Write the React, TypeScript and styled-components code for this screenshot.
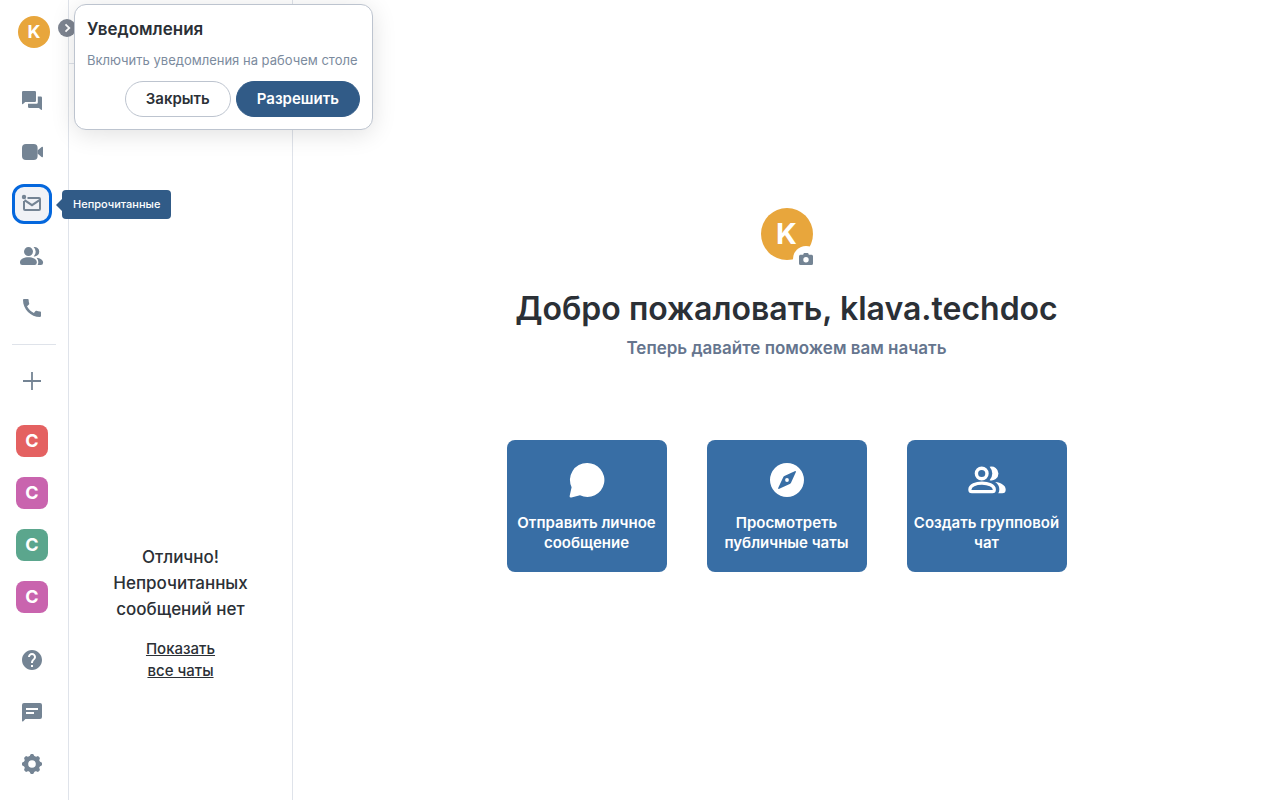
import React from "react";
import styled, { createGlobalStyle } from "styled-components";
import { MdCall, MdHelp } from "react-icons/md";

const GlobalStyle = createGlobalStyle`
  *, *::before, *::after { box-sizing: border-box; }
  body {
    margin: 0;
    background: #fff;
    color: #2b3036;
    font-family: Inter, "Liberation Sans", sans-serif;
    font-size: 15px;
  }
  button { font-family: inherit; margin: 0; cursor: pointer; }
  h1, h2, p { margin: 0; }
`;

const Page = styled.div`
  display: flex;
  min-height: 100vh;
`;

const Rail = styled.nav`
  position: relative;
  display: flex;
  flex-direction: column;
  flex: 0 0 69px;
  padding: 16px 12px;
  border-right: 1px solid #dfe3ea;
`;

const RailGroup = styled.div<{ $top?: number }>`
  display: flex;
  flex-direction: column;
  align-items: flex-start;
  gap: 12px;
  margin-top: ${(p) => p.$top ?? 0}px;
`;

const BottomGroup = styled(RailGroup)`
  margin-top: auto;
`;

const UserRow = styled.div`
  display: flex;
  padding-left: 6px;
`;

const UserButton = styled.button<{ $size: number }>`
  display: flex;
  align-items: center;
  justify-content: center;
  width: ${(p) => p.$size}px;
  height: ${(p) => p.$size}px;
  padding: 0 0 1px;
  border: 0;
  border-radius: 50%;
  background: #e8a63c;
  color: #fff;
  font-size: ${(p) => (p.$size > 40 ? 29 : 18)}px;
  font-weight: 700;
`;

const ExpandButton = styled.button`
  position: absolute;
  top: 19px;
  left: 58px;
  display: flex;
  align-items: center;
  justify-content: center;
  width: 18px;
  height: 18px;
  padding: 0;
  border: 0;
  border-radius: 50%;
  background: #7d8490;
  color: #fff;
`;

const RailButton = styled.button<{ $active?: boolean }>`
  position: relative;
  display: flex;
  align-items: center;
  justify-content: center;
  width: 40px;
  height: 40px;
  padding: 0;
  border: 3px solid ${(p) => (p.$active ? "#0467dd" : "transparent")};
  border-radius: 12px;
  background: ${(p) => (p.$active ? "#f0f2f6" : "transparent")};
  color: #748494;
`;

const Divider = styled.hr`
  width: 44px;
  height: 1px;
  margin: 16px 0 0;
  border: 0;
  background: #dfe3ea;
`;

const SpaceTile = styled.span<{ $color: string }>`
  display: flex;
  align-items: center;
  justify-content: center;
  flex: none;
  width: 32px;
  height: 32px;
  padding-bottom: 2px;
  border-radius: 8px;
  background: ${(p) => p.$color};
  color: #fff;
  font-size: 18px;
  font-weight: 700;
`;

const Tooltip = styled.div`
  position: absolute;
  top: 190px;
  left: 62px;
  z-index: 2;
  padding: 6px 11px;
  border-radius: 4px;
  background: #315b87;
  color: #fff;
  font-size: 11px;
  line-height: 17px;
  font-weight: 500;
  white-space: nowrap;

  &::before {
    content: "";
    position: absolute;
    top: 9px;
    left: -6px;
    border: 6px solid transparent;
    border-left-width: 0;
    border-right-color: #315b87;
  }
`;

const Toast = styled.section`
  position: absolute;
  top: 4px;
  left: 74px;
  z-index: 3;
  width: 299px;
  padding: 12px;
  border: 1px solid #bdc4cf;
  border-radius: 12px;
  background: #fff;
  box-shadow: 0 4px 24px rgba(0, 0, 0, 0.12);
`;

const ToastTitle = styled.h2`
  font-size: 17px;
  line-height: 24px;
  font-weight: 600;
`;

const ToastText = styled.p`
  margin-top: 8px;
  color: #7c8b9e;
  font-size: 13px;
  line-height: 22px;
  white-space: nowrap;
`;

const ToastActions = styled.div`
  display: flex;
  justify-content: flex-end;
  gap: 5px;
  margin-top: 10px;
`;

const PillButton = styled.button<{ $primary?: boolean }>`
  height: 36px;
  padding: 0 20px 2px;
  border: 1px solid ${(p) => (p.$primary ? "#315b87" : "#bdc4cf")};
  border-radius: 18px;
  background: ${(p) => (p.$primary ? "#315b87" : "#fff")};
  color: ${(p) => (p.$primary ? "#fff" : "#2b3036")};
  font-size: 15px;
  font-weight: 600;
`;

const RoomList = styled.aside`
  display: flex;
  flex-direction: column;
  flex: 0 0 224px;
  border-right: 1px solid #dfe3ea;
`;

const RoomListHeader = styled.header`
  height: 64px;
  border-bottom: 1px solid #dfe3ea;
`;

const EmptyState = styled.div`
  display: flex;
  flex: 1;
  flex-direction: column;
  align-items: center;
  justify-content: flex-end;
  gap: 16px;
  padding: 0 40px 118px;
  text-align: center;
`;

const EmptyText = styled.p`
  font-size: 17px;
  line-height: 26px;
  font-weight: 500;
`;

const EmptyLink = styled.a`
  width: 80px;
  color: inherit;
  font-size: 15px;
  line-height: 22px;
  font-weight: 500;
`;

const Main = styled.main`
  display: flex;
  flex: 1;
  flex-direction: column;
  align-items: center;
  justify-content: center;
  padding: 0 16px 20px;
  text-align: center;
`;

const AvatarWrap = styled.div`
  position: relative;
`;

const CameraBadge = styled.span`
  position: absolute;
  right: -6px;
  bottom: -12px;
  display: flex;
  align-items: center;
  justify-content: center;
  width: 26px;
  height: 26px;
  border-radius: 50%;
  background: #fff;
  color: #748494;
`;

const Title = styled.h1`
  margin-top: 28px;
  font-size: 32px;
  line-height: 42px;
  font-weight: 600;
`;

const Subtitle = styled.p`
  margin-top: 4px;
  color: #65758e;
  font-size: 17px;
  line-height: 28px;
  font-weight: 600;
`;

const Cards = styled.div`
  display: flex;
  flex-wrap: wrap;
  justify-content: center;
  gap: 40px;
  margin-top: 78px;
`;

const Card = styled.button`
  display: flex;
  flex-direction: column;
  align-items: center;
  gap: 13px;
  width: 160px;
  padding: 20px 4px 19px;
  border: 0;
  border-radius: 8px;
  background: #386ea5;
  color: #fff;
  font-size: 15px;
  line-height: 20px;
  font-weight: 600;
`;

type IconProps = { size?: number; children: React.ReactNode };

const Icon = ({ size = 24, children }: IconProps) => (
  <svg width={size} height={size} viewBox={`0 0 ${size} ${size}`} fill="currentColor" aria-hidden="true">
    {children}
  </svg>
);

const ChatsIcon = () => (
  <Icon>
    <path d="M3.2 3h11.6Q16 3 16 4.2v8.6q0 1.2-1.2 1.2H5.2L3 16.1Q2 16.6 2 15.6V4.2Q2 3 3.2 3z" />
    <path d="M17.8 8.6h3q1.2 0 1.2 1.2v11.5q0 1.2-1 .4L18.9 20H9.2Q8 20 8 18.8v-3h8.6q1.2 0 1.2-1.2z" />
  </Icon>
);

const VideoIcon = () => (
  <Icon>
    <rect x="2" y="4" width="15.6" height="16" rx="4" />
    <path d="M17.5 10.5 21.6 7.1Q23 6.3 23 7.7v8.6q0 1.4-1.4.6L17.5 13.5z" />
  </Icon>
);

const UnreadIcon = () => (
  <Icon>
    <path
      d="M7.5 6H19a1 1 0 0 1 1 1v10a1 1 0 0 1-1 1H5a1 1 0 0 1-1-1V9"
      fill="none"
      stroke="currentColor"
      strokeWidth="2"
    />
    <path d="m4.5 8.2 7.5 5 7.5-5" fill="none" stroke="currentColor" strokeWidth="2" />
    <circle cx="4" cy="5" r="2.2" />
  </Icon>
);

const PeopleIcon = () => (
  <Icon>
    <circle cx="8.5" cy="7.6" r="4.5" />
    <path d="M13.6 3.1a4.7 4.7 0 1 1 0 9.2q2.1-2.1 2.1-4.6t-2.1-4.6z" />
    <path d="M0 18.2C0 15 4.2 13.2 8.4 13.2s8.4 1.8 8.4 5v.6q0 2.2-2.2 2.2H2.2Q0 21 0 18.8z" />
    <path d="M16.6 13.7c3.5.4 6.5 2 6.5 4.7v.4q0 2.2-2.2 2.2h-3.3q.7-.9.7-2.4v-.5q0-2.4-1.7-4.4z" />
  </Icon>
);

const PlusIcon = () => (
  <Icon>
    <path d="M12 3v18M3 12h18" fill="none" stroke="currentColor" strokeWidth="1.8" />
  </Icon>
);

const FeedbackIcon = () => (
  <Icon>
    <path d="M4 3h16a2 2 0 0 1 2 2v12a2 2 0 0 1-2 2H5.4l-2.1 2.2Q2 22 2 20.5V5a2 2 0 0 1 2-2z" />
    <path d="M6 9h12M6 13h8" fill="none" stroke="#fff" strokeWidth="1.9" />
  </Icon>
);

const GearIcon = () => (
  <Icon>
    <circle cx="12" cy="12" r="6" fill="none" stroke="currentColor" strokeWidth="4.4" />
    {[0, 45, 90, 135, 180, 225, 270, 315].map((angle) => (
      <path key={angle} d="M9.3 5 10.3 2.7Q10.6 2 11.3 2h1.4q.7 0 1 .7L14.7 5z" transform={`rotate(${angle} 12 12)`} />
    ))}
  </Icon>
);

const ChevronIcon = () => (
  <Icon size={18}>
    <path d="m7.5 5.3 3.8 3.7-3.8 3.7" fill="none" stroke="currentColor" strokeWidth="1.8" />
  </Icon>
);

const CameraIcon = () => (
  <Icon size={14}>
    <path
      fillRule="evenodd"
      d="M4.5 1.7Q4.7 1 5.4 1h3.2q.7 0 .9.7l.3 1h2.7q1.5 0 1.5 1.5v7.3q0 1.5-1.5 1.5h-11Q0 13 0 11.5V4.2Q0 2.7 1.5 2.7h2.7zM7 5.1a2.7 2.7 0 1 0 0 5.4 2.7 2.7 0 0 0 0-5.4z"
    />
  </Icon>
);

const BubbleIcon = () => (
  <Icon size={40}>
    <path d="M20 3a17 17 0 1 1-7 32.3L4.4 37.5Q2.3 37.9 2.7 35.8L4.6 27.3A17 17 0 0 1 20 3z" />
  </Icon>
);

const CompassIcon = () => (
  <Icon size={40}>
    <path
      fillRule="evenodd"
      d="M20 3a17 17 0 1 0 0 34 17 17 0 0 0 0-34zM27.7 11.2Q29.4 10.7 28.8 12.3L24 22.7Q23.6 23.6 22.7 24L12.3 28.8Q10.7 29.4 11.3 27.7L16.1 17.4Q16.5 16.5 17.4 16.1z"
    />
    <circle cx="20" cy="20" r="1.9" />
  </Icon>
);

const GroupIcon = () => (
  <Icon size={40}>
    <circle cx="14.7" cy="13.5" r="5.3" fill="none" stroke="currentColor" strokeWidth="3.4" />
    <path d="M22.6 6.8a7 7 0 1 1 0 13.5q2.7-3 2.7-6.7t-2.7-6.8z" />
    <path
      d="M2.9 29.4c0-4 6-6.3 12.1-6.3s12.3 2.3 12.3 6.3v.4q0 1.9-1.9 1.9H4.8q-1.9 0-1.9-1.9z"
      fill="none"
      stroke="currentColor"
      strokeWidth="3.2"
    />
    <path d="M28.2 22c5.7.6 10.5 3.3 10.5 7.4v.4q0 3.5-3.5 3.5h-4q1.1-1.5 1.1-3.5v-.8q0-4-4.1-7z" />
  </Icon>
);

const spaces = [
  { id: "red", color: "#e46161" },
  { id: "pink", color: "#c964ae" },
  { id: "green", color: "#5ba68d" },
  { id: "pink-second", color: "#c964ae" },
];

const actions = [
  { label: "Отправить личное сообщение", icon: <BubbleIcon /> },
  { label: "Просмотреть публичные чаты", icon: <CompassIcon /> },
  { label: "Создать групповой чат", icon: <GroupIcon /> },
];

export default function App() {
  return (
    <>
      <GlobalStyle />
      <Page>
        <Rail>
          <UserRow>
            <UserButton $size={32}>K</UserButton>
          </UserRow>
          <ExpandButton>
            <ChevronIcon />
          </ExpandButton>
          <RailGroup $top={32}>
            <RailButton>
              <ChatsIcon />
            </RailButton>
            <RailButton>
              <VideoIcon />
            </RailButton>
            <RailButton $active aria-describedby="unread-tooltip">
              <UnreadIcon />
            </RailButton>
            <RailButton>
              <PeopleIcon />
            </RailButton>
            <RailButton>
              <MdCall size={24} />
            </RailButton>
          </RailGroup>
          <Divider />
          <RailGroup $top={16}>
            <RailButton>
              <PlusIcon />
            </RailButton>
          </RailGroup>
          <RailGroup $top={20}>
            {spaces.map((space) => (
              <RailButton key={space.id}>
                <SpaceTile $color={space.color}>C</SpaceTile>
              </RailButton>
            ))}
          </RailGroup>
          <BottomGroup>
            <RailButton>
              <MdHelp size={24} />
            </RailButton>
            <RailButton>
              <FeedbackIcon />
            </RailButton>
            <RailButton>
              <GearIcon />
            </RailButton>
          </BottomGroup>
          <Tooltip id="unread-tooltip" role="tooltip">
            Непрочитанные
          </Tooltip>
        </Rail>
        <RoomList>
          <RoomListHeader />
          <EmptyState>
            <EmptyText>Отлично! Непрочитанных сообщений нет</EmptyText>
            <EmptyLink href="#all">Показать все чаты</EmptyLink>
          </EmptyState>
        </RoomList>
        <Main>
          <AvatarWrap>
            <UserButton $size={52}>K</UserButton>
            <CameraBadge>
              <CameraIcon />
            </CameraBadge>
          </AvatarWrap>
          <Title>Добро пожаловать, klava.techdoc</Title>
          <Subtitle>Теперь давайте поможем вам начать</Subtitle>
          <Cards>
            {actions.map((action) => (
              <Card key={action.label}>
                {action.icon}
                {action.label}
              </Card>
            ))}
          </Cards>
        </Main>
        <Toast>
          <ToastTitle>Уведомления</ToastTitle>
          <ToastText>Включить уведомления на рабочем столе</ToastText>
          <ToastActions>
            <PillButton>Закрыть</PillButton>
            <PillButton $primary>Разрешить</PillButton>
          </ToastActions>
        </Toast>
      </Page>
    </>
  );
}
